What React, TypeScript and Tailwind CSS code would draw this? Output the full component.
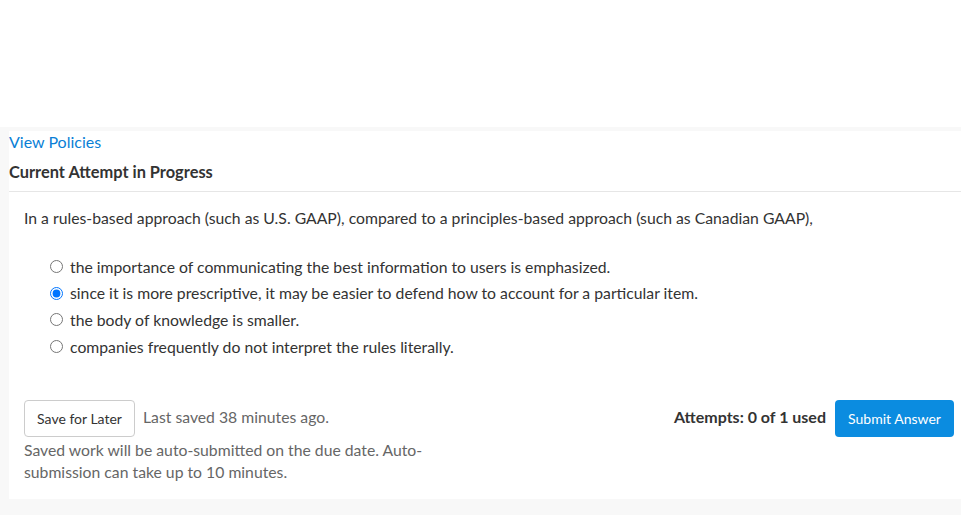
import React from 'react'

const options = [
  'the importance of communicating the best information to users is emphasized.',
  'since it is more prescriptive, it may be easier to defend how to account for a particular item.',
  'the body of knowledge is smaller.',
  'companies frequently do not interpret the rules literally.',
]

export default function App() {
  return (
    <div className="min-h-[515px] bg-[#f8f8f8] font-['Lato',sans-serif] text-[15.75px] text-[#333]">
      {/* Top blank */}
      <div className="h-[127px] bg-white" />

      <div className="pl-[9px] pt-[4px] pb-[16px]">
        <div className="bg-white">
          {/* Header */}
          <div className="border-b border-[#e6e6e6] pb-[8px]">
            <a href="#" className="block text-[16px] leading-[22px] text-[#0a7fd6]">
              View Policies
            </a>
            <h2 className="mt-[8px] text-[16.4px] font-bold leading-[22px] text-[#333]">Current Attempt in Progress</h2>
          </div>

          {/* Body */}
          <div className="pl-[15px] pr-[7px] pt-[15px] pb-[16px]">
            <p className="leading-[22px]">
              In a rules-based approach (such as U.S. GAAP), compared to a principles-based approach (such as Canadian GAAP),
            </p>

            <div className="mt-[24px] pl-[26px]">
              {options.map((opt, i) => (
                <label key={i} className="flex h-[26.7px] items-center gap-[7px]">
                  <input
                    type="radio"
                    name="answer"
                    defaultChecked={i === 1}
                    className="m-0 h-[13px] w-[13px]"
                  />
                  <span>{opt}</span>
                </label>
              ))}
            </div>

            {/* Footer */}
            <div className="mt-[40px] flex items-start justify-between">
              <div className="w-[410px]">
                <div className="flex items-center gap-[8px]">
                  <button className="h-[37px] w-[111px] rounded-[4px] border border-[#cccccc] bg-white text-[14px] text-[#333]">
                    Save for Later
                  </button>
                  <span className="-mt-[2px] text-[#666]">Last saved 38 minutes ago.</span>
                </div>
                <p className="mt-[2px] leading-[22px] text-[#666]">
                  Saved work will be auto-submitted on the due date. Auto-submission can take up to 10 minutes.
                </p>
              </div>
              <div className="flex items-center gap-[9px]">
                <span className="-mt-[2px] text-[16px] font-bold text-[#333]">Attempts: 0 of 1 used</span>
                <button className="h-[37px] w-[119px] rounded-[4px] bg-[#0b8ce0] text-[14px] text-white">
                  Submit Answer
                </button>
              </div>
            </div>
          </div>
        </div>
      </div>
    </div>
  )
}
